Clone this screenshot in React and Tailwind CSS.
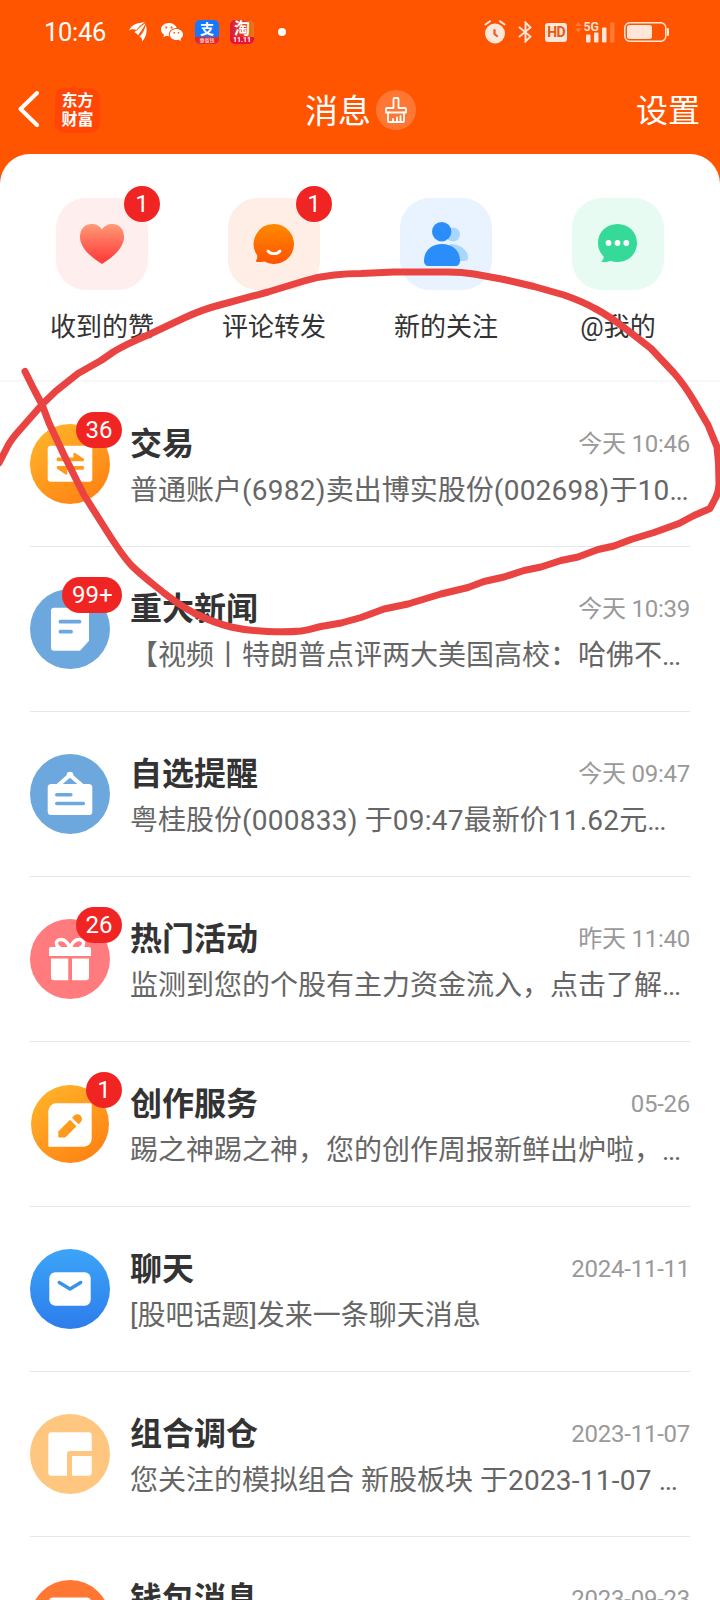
import { RiWechatFill } from 'react-icons/ri';

const tabs = [
  { label: '收到的赞', bg: 'bg-[#ffeeee]', badge: '1', icon: 'heart' },
  { label: '评论转发', bg: 'bg-[#ffeee5]', badge: '1', icon: 'comment' },
  { label: '新的关注', bg: 'bg-[#e8f3ff]', icon: 'follow' },
  { label: '@我的', bg: 'bg-[#e8fbf3]', icon: 'mention' },
];

const messages = [
  { title: '交易', time: '今天 10:46', text: '普通账户(6982)卖出博实股份(002698)于10...', badge: '36', icon: 'trade' },
  { title: '重大新闻', time: '今天 10:39', text: '【视频丨特朗普点评两大美国高校：哈佛不...', badge: '99+', icon: 'news' },
  { title: '自选提醒', time: '今天 09:47', text: '粤桂股份(000833) 于09:47最新价11.62元...', icon: 'alert' },
  { title: '热门活动', time: '昨天 11:40', text: '监测到您的个股有主力资金流入，点击了解...', badge: '26', icon: 'gift' },
  { title: '创作服务', time: '05-26', text: '踢之神踢之神，您的创作周报新鲜出炉啦，...', badge: '1', icon: 'create' },
  { title: '聊天', time: '2024-11-11', text: '[股吧话题]发来一条聊天消息', icon: 'chat' },
  { title: '组合调仓', time: '2023-11-07', text: '您关注的模拟组合 新股板块 于2023-11-07 ...', icon: 'portfolio' },
  { title: '钱包消息', time: '2023-09-23', text: '', icon: 'wallet' },
];

const tabIcons = {
  heart: (
    <path d="M46 66C38 61 24 51 24 39c0-8 5-13 11.500-13 4.500 0 8.500 2 10.500 5.500C48 28 52 26 56.500 26 63 26 68 31 68 39c0 12-14 22-22 27z" fill="url(#heart)" />
  ),
  comment: (
    <>
      <path d="M46 26a20 20 0 1 1-9.500 37.600c-2 .4-5 .7-7.500.4-1.200-.2-1.300-1-.6-2 .9-1.500 1.200-3.500.6-5A20 20 0 0 1 46 26z" fill="url(#comment)" />
      <path d="M40 53c3 3.600 9 3.600 12 0" stroke="#fff" strokeWidth="2.800" strokeLinecap="round" fill="none" />
    </>
  ),
  follow: (
    <>
      <circle cx="53" cy="36.500" r="7" fill="#a9d6ff" />
      <path d="M50 46c11 0 18 7 18 13 0 3-1.500 4-4 4H50z" fill="#a9d6ff" />
      <circle cx="41.700" cy="33.700" r="9.700" fill="#2a8dfa" />
      <path d="M42 46c11.500 0 18 7.500 18 16.500 0 3.500-1.500 5.500-5 5.500H29c-3.500 0-5-2-5-5.500C24 53.500 30.500 46 42 46z" fill="#2a8dfa" />
    </>
  ),
  mention: (
    <>
      <path d="M45.500 26C57 26 65 34.500 65 45s-8 19-19.500 19c-2.500 0-4.800-.4-7-1.200-2.500 1.100-5.500 1.600-8 1.300-1-.1-1-.8-.4-1.400 1.200-1.200 1.700-2.700 1.500-4.200A19 19 0 0 1 26 45c0-10.500 8-19 19.500-19z" fill="#35da99" />
      <circle cx="36.500" cy="45" r="2.900" fill="#fff" />
      <circle cx="45.500" cy="45" r="2.900" fill="#fff" />
      <circle cx="54.300" cy="45" r="2.900" fill="#fff" />
    </>
  ),
};

const rowIcons = {
  trade: (
    <>
      <circle cx="40" cy="40" r="40" fill="url(#amber)" />
      <rect x="17.700" y="21.700" width="44.600" height="36" rx="3" fill="#fff" />
      <path d="M28 33.500h15.500v-3.700c0-1 .9-1.300 1.600-.7L53.500 34.500c1 .8.600 2.700-.8 2.700H28c-1.800 0-1.800-3.700 0-3.700zM52.700 42h-24.700c-1.400 0-1.800 1.900-.8 2.700l8.400 5.700c.7.500 1.600.2 1.600-.7v-4h15.500c1.800 0 1.800-3.700 0-3.700z" fill="#ff9a1c" />
    </>
  ),
  news: (
    <>
      <circle cx="40" cy="40" r="40" fill="#6ca7dd" />
      <path d="M24 18.700h32a3 3 0 0 1 3 3v30l-9 10H24a3 3 0 0 1-3-3v-37a3 3 0 0 1 3-3z" fill="#fff" />
      <path d="M30.500 32.700h19M30.500 42.700h10.500" stroke="#6ca7dd" strokeWidth="3.800" strokeLinecap="round" />
    </>
  ),
  alert: (
    <>
      <circle cx="40" cy="40" r="40" fill="#6ca7dd" />
      <circle cx="40" cy="21" r="3.300" fill="#fff" />
      <path d="M28 31.500 40 21l12 10.500" stroke="#fff" strokeWidth="4" fill="none" />
      <rect x="17.700" y="30" width="44.600" height="31" rx="3.500" fill="#fff" />
      <path d="M26.800 40.800h14M26.800 49.500h26.500" stroke="#6ca7dd" strokeWidth="3.600" strokeLinecap="round" />
    </>
  ),
  gift: (
    <>
      <circle cx="40" cy="40" r="40" fill="#ff7b7d" />
      <path d="M40 29c-2-5-5-8.500-9-8.500-3 0-5 2-4.500 4.500.3 2 2 3.500 4 4M40 29c2-5 5-8.500 9-8.500 3 0 5 2 4.500 4.500-.3 2-2 3.500-4 4" stroke="#fff" strokeWidth="3.400" fill="none" />
      <path d="M21 28h38a2 2 0 0 1 2 2v7H19v-7a2 2 0 0 1 2-2z" fill="#fff" />
      <path d="M21 39.500h17.300v21.800H24a3 3 0 0 1-3-3zM42 39.500h17v18.800a3 3 0 0 1-3 3H42z" fill="#fff" />
    </>
  ),
  create: (
    <>
      <circle cx="40" cy="40" r="39" fill="url(#amber)" />
      <path d="M26.300 19.300h34.400a1 1 0 0 1 1 1v34.400a8 8 0 0 1-8 8H19.300a1 1 0 0 1-1-1V27.300a8 8 0 0 1 8-8z" fill="#fff" />
      <path d="M28.300 47.500 40 35.800l6.500 6.500-11.200 11.200h-6a1 1 0 0 1-1-1zM42 33.700l2-2a4.600 4.600 0 0 1 6.600 6.600l-2 2z" fill="#ff9a1c" />
    </>
  ),
  chat: (
    <>
      <circle cx="40" cy="40" r="40" fill="url(#blue)" />
      <rect x="19.300" y="23.300" width="41.400" height="33.400" rx="6" fill="#fff" />
      <path d="M29.300 33.500 40 40l10.700-6.500" stroke="#3a93e8" strokeWidth="3.400" strokeLinecap="round" strokeLinejoin="round" fill="none" />
    </>
  ),
  portfolio: (
    <>
      <circle cx="40" cy="40" r="40" fill="#ffc680" />
      <path d="M21.300 18.300h37.400a3 3 0 0 1 3 3V37H40a3 3 0 0 0-3 3v21.700H21.300a3 3 0 0 1-3-3V21.300a3 3 0 0 1 3-3z" fill="#fff" />
      <path d="M42 42h19.700v16.700a3 3 0 0 1-3 3H42z" fill="#fff" />
    </>
  ),
  wallet: (
    <>
      <circle cx="40" cy="41" r="40" fill="#ff7733" />
      <rect x="19" y="18.500" width="42" height="40" rx="4" fill="#fff" />
    </>
  ),
};

// shared gradients used by the round icons
const Gradients = () => (
  <svg className="absolute h-0 w-0">
    <defs>
      <linearGradient id="heart" x1="0" y1="0" x2="0" y2="1">
        <stop offset="0" stopColor="#ff9a76" />
        <stop offset="0.85" stopColor="#ff4340" />
      </linearGradient>
      <linearGradient id="comment" x1="0" y1="0" x2="0" y2="1">
        <stop offset="0" stopColor="#ff8a00" />
        <stop offset="1" stopColor="#ff5300" />
      </linearGradient>
      <linearGradient id="amber" x1="0.15" y1="0" x2="0.85" y2="1">
        <stop offset="0" stopColor="#ffb42a" />
        <stop offset="1" stopColor="#ff8012" />
      </linearGradient>
      <linearGradient id="blue" x1="0" y1="0" x2="0" y2="1">
        <stop offset="0" stopColor="#3ca4f7" />
        <stop offset="1" stopColor="#2d7dec" />
      </linearGradient>
    </defs>
  </svg>
);

const Badge = ({ children }) => (
  <span className="absolute -top-3 -right-3 flex h-9 min-w-9 items-center justify-center rounded-full bg-[#f12424] px-[9.5px] text-2xl leading-none text-white">
    {children}
  </span>
);

// digits run slightly wider than the font's own spacing, the ellipsis tighter
const Spaced = ({ text }) =>
  text.split(/([(\d][\d():.-]*[\d)]|\.{3})/).map((part, i) => {
    if (i % 2 === 0) return part;
    return (
      <span key={i} className={part === '...' ? 'tracking-[-1.4px]' : 'tracking-[0.25px]'}>
        {part}
      </span>
    );
  });

const StatusBar = () => (
  <div className="flex h-[66px] items-center pr-[50px] pb-0.5 pl-11 text-white">
    <span className="w-[85px] pt-0.5 text-[25.5px] leading-none tracking-[-0.3px]">10:46</span>
    <svg className="h-5 w-[18px]" viewBox="0 0 18 20" fill="#fff">
      <path d="M0 8.500C2 3 8 .5 16 .2 12.500 2.500 9 4.500 7.500 8 5 6.800 2 7 0 8.500z" />
      <path d="M5.500 10.500C8 6 12 3.500 16.500 1.500c-1.500 4.500-4 8.500-7.500 12-.3-1.500-1.500-2.500-3.500-3z" />
      <path d="M10.500 14.500C14 11.500 16 7 16.800 2.500 18.500 9 17.500 15 13 19.500c.3-2.500-.5-4-2.500-5z" />
      <path d="M7.200 8.800 14.500 2M9.800 13.200 16.500 3" stroke="#ff5500" strokeWidth="0.900" />
    </svg>
    <RiWechatFill className="ml-[13px] h-6 w-6" />
    <div className="ml-[11px] flex h-6 w-6 flex-col overflow-hidden rounded-[5px] bg-[#1677ff]">
      <span className="h-[17px] text-center text-[14px] leading-[19px] font-bold">支</span>
      <span className="h-[7px] bg-[#e9281f] text-center text-[5px] leading-[7px]">惠省钱</span>
    </div>
    <div className="ml-[11px] flex h-6 w-6 flex-col overflow-hidden rounded-[5px] bg-linear-to-r from-[#d81c3c] via-[#e8341c] to-[#e87a1c]">
      <span className="h-[17px] text-center text-[16px] leading-[18px] font-bold">淘</span>
      <span className="h-[7px] bg-[#e8103c] text-center text-[7px] leading-[7px] font-bold">11.11</span>
    </div>
    <span className="ml-6 h-2 w-2 rounded-full bg-white" />

    <div className="ml-auto flex items-center text-[#ffe6db]">
      <svg className="h-6 w-[22px]" viewBox="0 0 22 24">
        <circle cx="11" cy="13.500" r="10" fill="currentColor" />
        <path d="M1.500 4.500 6 1.200M20.500 4.500 16 1.200" stroke="currentColor" strokeWidth="2" strokeLinecap="round" />
        <path d="M10.500 10v4l2.500 2" stroke="#e06020" strokeWidth="2.200" strokeLinecap="round" fill="none" />
      </svg>
      <svg className="ml-3 h-[22px] w-3.5" viewBox="0 0 14 22" fill="none" stroke="currentColor" strokeWidth="1.900">
        <path d="M1 6 12.500 15.500 7.500 20.500v-19l5 5L1 16" />
      </svg>
      <span className="ml-[13px] flex h-[19px] w-[22px] items-center justify-center rounded-[3px] bg-[#ffe6db] text-[14px] leading-none font-bold tracking-tighter text-[#e8580f]">
        HD
      </span>
      <svg className="ml-2 h-6 w-10" viewBox="0 0 40 24" fill="currentColor">
        <path d="M0 6l3.500-4L7 6zM0 8.500l3.500 4 3.500-4z" opacity="0.25" />
        <rect x="11" y="14.500" width="4.500" height="8" rx="1" />
        <rect x="19" y="12.500" width="4.500" height="10" rx="1" />
        <rect x="27" y="7.500" width="4.500" height="15" rx="1" />
        <rect x="35" y="2.500" width="4.500" height="20" rx="1" opacity="0.25" />
        <text x="8.500" y="11" fontSize="13" fontWeight="600" textLength="15.500" lengthAdjust="spacingAndGlyphs">5G</text>
      </svg>
      <svg className="ml-[9px] h-5 w-[46px]" viewBox="0 0 46 20">
        <rect x="0.800" y="0.800" width="41" height="18.400" rx="5" fill="none" stroke="currentColor" strokeWidth="1.500" />
        <rect x="3" y="3" width="25" height="14" rx="2.500" fill="currentColor" />
        <rect x="43" y="6" width="2" height="8" rx="1" fill="currentColor" />
      </svg>
    </div>
  </div>
);

const Header = () => (
  <div className="grid h-[88px] grid-cols-3 items-center pr-5 pl-[18px] text-[32px] leading-none text-white">
    <div className="flex items-center">
      <svg className="h-[38px] w-[22px]" viewBox="0 0 22 38" fill="none" stroke="#fff" strokeWidth="4" strokeLinecap="round" strokeLinejoin="round">
        <path d="M19 2 2.500 18 19 34" />
      </svg>
      <div className="ml-[15px] flex h-[45px] w-[45px] flex-col items-center justify-center rounded-[10px] bg-[#ff4606] pb-px text-base leading-[19px] font-bold">
        <span>东方</span>
        <span>财富</span>
      </div>
    </div>
    <div className="flex items-center justify-center gap-[5px] pl-[3px]">
      <h1 className="pt-0.5 text-[33px]">消息</h1>
      <div className="flex h-10 w-10 shrink-0 items-center justify-center rounded-full bg-[#ff7733]">
        <svg className="h-[26px] w-[22px]" viewBox="0 0 22 26" fill="none" stroke="#fff" strokeWidth="1.800" strokeLinejoin="round" strokeLinecap="round">
          <path d="M8.500 11V2.200c0-.7.400-1.200 1-1.200h3c.6 0 1 .5 1 1.200V11H20a1 1 0 0 1 1 1v3.500H1V12a1 1 0 0 1 1-1z" />
          <path d="M3 15.500V24c0 .6.400 1 1 1h14c.6 0 1-.4 1-1v-8.500M8 25v-3M12 25v-4.500M15.500 25v-6" />
        </svg>
      </div>
    </div>
    <span className="pt-0.5 text-right">设置</span>
  </div>
);

const TabItem = ({ label, bg, badge, icon }) => (
  <div className="flex flex-col items-center">
    <div className={`relative h-[92px] w-[92px] rounded-[30px] ${bg}`}>
      <svg className="h-full w-full" viewBox="0 0 92 92">{tabIcons[icon]}</svg>
      {badge && <Badge>{badge}</Badge>}
    </div>
    <p className="mt-[17px] text-[26px] leading-10 text-[#333]">{label}</p>
  </div>
);

const MessageRow = ({ title, time, text, badge, icon }) => (
  <div className="flex h-[165px] shrink-0 items-center gap-5 border-b border-[#e6e6e6]">
    <div className="relative h-20 w-20 shrink-0">
      <svg className="h-full w-full" viewBox="0 0 80 80">{rowIcons[icon]}</svg>
      {badge && <Badge>{badge}</Badge>}
    </div>
    <div className="h-[87px] min-w-0 flex-1 pt-[3px]">
      <div className="flex items-center justify-between leading-10">
        <h2 className="text-[32px] font-bold text-[#333]">{title}</h2>
        <span className="text-2xl leading-10 tracking-[-0.25px] text-[#999]">{time}</span>
      </div>
      <p className="mt-[7px] text-[28px] leading-10 whitespace-nowrap text-[#666]">
        <Spaced text={text} />
      </p>
    </div>
  </div>
);

// hand-drawn marker circle over the first message
const Marker = () => (
  <svg className="pointer-events-none absolute inset-0 h-full w-full" viewBox="0 0 720 1600" fill="none">
    <path
      d="M25 371.500 34 389.500 42 404.500 49 423 64 455 84 495 108 533C115 544 122 555 131 565 142 576 153 584 164 593 173 600 183 607 194 613 206 619 219 624 231 627 244 630 256 631 268 631.500 279 632 291 632 301 631 308 630 314 628 321 626.500L341 623 361 617.500 384 609 408 604 441 594 468 587.500 484 581.500 504 577 524 570.500 541 567 561 560.500 578 557 598 549.500 614 546 631 539.500 654 532.500 679 523.500 694 515.500 710 508.500 715.500 498C718 493 719 489 719 484L718.500 463 717 447 708 425 694 401C688 391 682 382 674 373L651 348.500 628 330.500C617 322 606 314 594 308 585 303 574 298.500 564 295L534 286.500 504 279.500 474 274C465 272.500 456 272 448 272H394L361 273.500C351 273.500 343 274 334 275 324 276 314 278 304 281L268 292 218 305.500C206 308.500 195 313 184 318L148 335C136 340 125 345 114 351.500L101 360.500 78 373.500 56 391 43 403.500 21 428.500C16 434 11 440 8 445.500L-1 463"
      stroke="#e94442"
      strokeWidth="7"
      strokeLinecap="round"
      strokeLinejoin="round"
    />
  </svg>
);

const App = () => (
  <div className="relative flex h-[1600px] w-[720px] flex-col overflow-hidden bg-[#ff5500] font-['Roboto','Noto_Sans_CJK_SC',sans-serif]">
    <Gradients />
    <StatusBar />
    <Header />
    <div className="flex min-h-0 flex-1 flex-col overflow-hidden rounded-t-[30px] bg-white">
      <div className="grid h-[228px] shrink-0 grid-cols-4 border-b-2 border-[#f7f7f7] px-4 pt-11">
        {tabs.map(t => (
          <TabItem key={t.label} {...t} />
        ))}
      </div>
      <div className="flex flex-col px-[30px]">
        {messages.map(m => (
          <MessageRow key={m.title} {...m} />
        ))}
      </div>
    </div>
    <Marker />
  </div>
);

export default App;
